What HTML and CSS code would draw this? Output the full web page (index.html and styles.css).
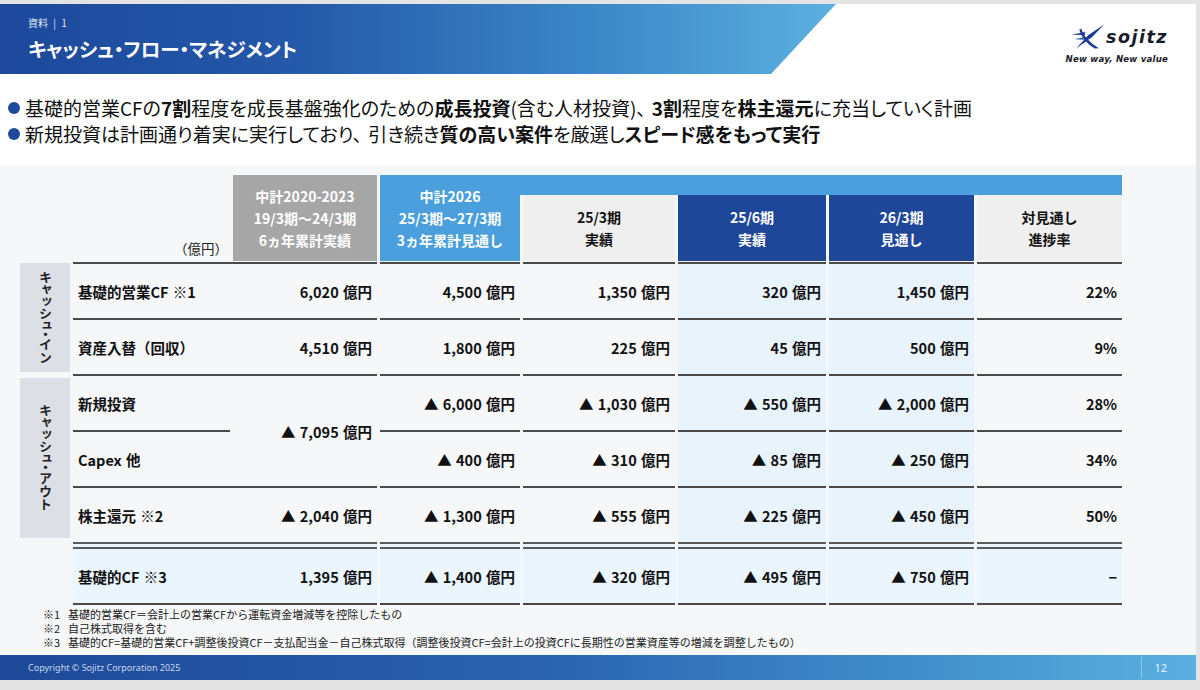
FILE: index.html
```html
<!DOCTYPE html>
<html lang="ja">
<head>
<meta charset="utf-8">
<title>キャッシュ・フロー・マネジメント</title>
<link rel="stylesheet" href="styles.css">
</head>
<body>
<div class="slide">
  <header class="topbar">
    <div class="band">
      <div class="kicker">資料 | 1</div>
      <h1 class="title">キャッシュ・フロー・マネジメント</h1>
    </div>
    <div class="logo">
      <div class="logo-row">
        <svg class="emblem" viewBox="0 0 32 24" width="34" height="25" aria-hidden="true">
          <path d="M0 10.2 L13.5 7.6 L12.8 10.6 Z" fill="#1c3a94"/>
          <path d="M3 14.6 L12.5 12.4 L11.8 15 Z" fill="#2f62ba"/>
          <path d="M4.5 23.5 L16.5 10.5 L31.5 0.5 L20 12.5 Z" fill="#1c3a94"/>
          <path d="M9.5 4.5 Q13 15.5 26.5 23.2 L22.5 23.6 Q11 17 7.6 5.6 Z" fill="#1c3a94"/>
        </svg>
        <span class="brand">sojitz</span>
      </div>
      <div class="tagline">New way, New value</div>
    </div>
  </header>

  <ul class="bullets">
    <li><span class="dot"></span><span>基礎的営業CFの<b>7割</b>程度を成長基盤強化のための<b>成長投資</b>(含む人材投資)<span class="comma">、</span><b>3割</b>程度を<b>株主還元</b>に充当していく計画</span></li>
    <li><span class="dot"></span><span>新規投資は計画通り着実に実行しており<span class="comma">、</span>引き続き<b>質の高い案件</b>を厳選し<b>スピード感をもって実行</b></span></li>
  </ul>

  <main class="main">
    <div class="cf-table">
      <div class="spacer head-spacer"></div>
      <div class="unit">（億円）</div>
      <div class="h h-gray">中計2020-2023<br>19/3期～24/3期<br>6ヵ年累計実績</div>
      <div class="h-band"></div>
      <div class="h h-light">中計2026<br>25/3期～27/3期<br>3ヵ年累計見通し</div>
      <div class="h h-plain h-c3">25/3期<br>実績</div>
      <div class="h h-dark h-c4">25/6期<br>実績</div>
      <div class="h h-dark h-c5">26/3期<br>見通し</div>
      <div class="h h-plain h-c6">対見通し<br>進捗率</div>

      <div class="cat cat-in"><span>キャッシュ・イン</span></div>
      <div class="cat cat-out"><span>キャッシュ・アウト</span></div>
      <div class="c num merged">▲ 7,095 億円</div>
      <div class="spacer foot-spacer"></div>

      <div class="c lbl">基礎的営業CF ※1</div>
      <div class="c num">6,020 億円</div>
      <div class="c num">4,500 億円</div>
      <div class="c num">1,350 億円</div>
      <div class="c num blue">320 億円</div>
      <div class="c num blue">1,450 億円</div>
      <div class="c num">22%</div>

      <div class="c lbl">資産入替（回収）</div>
      <div class="c num">4,510 億円</div>
      <div class="c num">1,800 億円</div>
      <div class="c num">225 億円</div>
      <div class="c num blue">45 億円</div>
      <div class="c num blue">500 億円</div>
      <div class="c num">9%</div>

      <div class="c lbl">新規投資</div>
      <div class="c num">▲ 6,000 億円</div>
      <div class="c num">▲ 1,030 億円</div>
      <div class="c num blue">▲ 550 億円</div>
      <div class="c num blue">▲ 2,000 億円</div>
      <div class="c num">28%</div>

      <div class="c lbl short">Capex 他</div>
      <div class="c num">▲ 400 億円</div>
      <div class="c num">▲ 310 億円</div>
      <div class="c num blue">▲ 85 億円</div>
      <div class="c num blue">▲ 250 億円</div>
      <div class="c num">34%</div>

      <div class="c lbl">株主還元 ※2</div>
      <div class="c num">▲ 2,040 億円</div>
      <div class="c num">▲ 1,300 億円</div>
      <div class="c num">▲ 555 億円</div>
      <div class="c num blue">▲ 225 億円</div>
      <div class="c num blue">▲ 450 億円</div>
      <div class="c num">50%</div>

      <div class="c lbl total">基礎的CF ※3</div>
      <div class="c num total">1,395 億円</div>
      <div class="c num total">▲ 1,400 億円</div>
      <div class="c num total">▲ 320 億円</div>
      <div class="c num total">▲ 495 億円</div>
      <div class="c num total">▲ 750 億円</div>
      <div class="c num total">−</div>
    </div>

    <div class="notes">
      <div class="note"><span class="mark">※1</span>基礎的営業CF＝会計上の営業CFから運転資金増減等を控除したもの</div>
      <div class="note"><span class="mark">※2</span>自己株式取得を含む</div>
      <div class="note"><span class="mark">※3</span>基礎的CF=基礎的営業CF+調整後投資CF－支払配当金－自己株式取得（調整後投資CF=会計上の投資CFに長期性の営業資産等の増減を調整したもの）</div>
    </div>
  </main>

  <footer class="footer">
    <span class="copy">Copyright © Sojitz Corporation 2025</span>
    <span class="page">12</span>
  </footer>
</div>
</body>
</html>
```

FILE: styles.css
```css
* { box-sizing: border-box; }

html, body {
  margin: 0;
  padding: 0;
}

body {
  width: 1200px;
  height: 690px;
  overflow: hidden;
  background: #e4e4e4;
  font-family: "Noto Sans CJK JP", "Noto Sans", sans-serif;
  color: #111;
}

.slide {
  width: 1196px;
  height: 676px;
  margin-top: 4px;
  background: #ffffff;
  display: flex;
  flex-direction: column;
}

/* ---------- top bar ---------- */
.topbar {
  height: 70px;
  display: flex;
  justify-content: space-between;
  flex-shrink: 0;
}

.band {
  width: 836px;
  height: 70px;
  padding: 12px 0 0 28px;
  background: linear-gradient(90deg, #1d489c 0%, #2458a8 35%, #3b86c6 70%, #5cb0e0 100%);
  clip-path: polygon(0 0, 836px 0, 771px 100%, 0 100%);
  color: #fff;
}

.kicker {
  font-size: 10px;
  line-height: 14px;
  color: #dfe8f6;
  word-spacing: 3px;
}

.title {
  margin: 5px 0 0;
  font-size: 19.5px;
  line-height: 28px;
  font-weight: 700;
  font-feature-settings: "palt";
}

.logo {
  margin: 20px 28px 0 0;
  display: flex;
  flex-direction: column;
  align-items: flex-end;
}

.logo-row {
  display: flex;
  align-items: center;
  gap: 1px;
}

.emblem { display: block; }

.brand {
  font-family: "DejaVu Sans", sans-serif;
  font-weight: 700;
  font-style: italic;
  font-size: 17.5px;
  line-height: 20px;
  letter-spacing: 1.5px;
  color: #1a1a2a;
}

.tagline {
  margin-top: 5px;
  font-family: "DejaVu Sans", sans-serif;
  font-weight: 700;
  font-style: italic;
  font-size: 8.6px;
  line-height: 11px;
  color: #1a1a2a;
  letter-spacing: 0.2px;
}

/* ---------- bullets ---------- */
.bullets {
  list-style: none;
  margin: 0;
  padding: 21px 0 0 8px;
  height: 91px;
  flex-shrink: 0;
}

.bullets li {
  display: flex;
  align-items: center;
  font-size: 19px;
  line-height: 26px;
  color: #111;
  white-space: nowrap;
  font-feature-settings: "palt";
}

.bullets b { font-weight: 700; }

.comma { margin-right: 6px; }

.dot {
  width: 12px;
  height: 12px;
  border-radius: 50%;
  background: #1f4a9c;
  margin-right: 5px;
  flex-shrink: 0;
}

/* ---------- main / table ---------- */
.main {
  flex: 1;
  background: #f6f7f8;
  padding-top: 10px;
}

.cf-table {
  margin-left: 20px;
  display: grid;
  grid-template-columns: 50px 157px 144px 140px 152px 148px 145px 145px;
  grid-template-rows: 20px 67px repeat(5, 56px) 63px;
  column-gap: 3px;
}

.head-spacer { grid-column: 1; grid-row: 1 / 3; }
.foot-spacer { grid-column: 1; grid-row: 8; }

.unit {
  grid-column: 2;
  grid-row: 1 / 3;
  align-self: end;
  text-align: right;
  padding: 0 2px 5px 0;
  font-size: 13.5px;
  line-height: 18px;
  color: #222;
}

.h {
  display: flex;
  flex-direction: column;
  align-items: center;
  justify-content: center;
  text-align: center;
  font-size: 14px;
  font-weight: 700;
  line-height: 22px;
  margin-bottom: 1px;
}

.h-gray {
  grid-column: 3;
  grid-row: 1 / 3;
  background: #a6a6a6;
  color: #fff;
}

.h-band {
  grid-column: 4 / 9;
  grid-row: 1;
  background: #4a9fdc;
}

.h-light {
  grid-column: 4;
  grid-row: 1 / 3;
  background: #4a9fdc;
  color: #fff;
}

.h-c3 { grid-column: 5; grid-row: 2; }
.h-c4 { grid-column: 6; grid-row: 2; }
.h-c5 { grid-column: 7; grid-row: 2; }
.h-c6 { grid-column: 8; grid-row: 2; }

.h-plain {
  background: #efefef;
  color: #111;
  border-radius: 3px 3px 0 0;
}

.h-dark {
  background: #1f4799;
  color: #fff;
}

.cat {
  grid-column: 1;
  background: #dcdfe6;
  display: flex;
  align-items: center;
  justify-content: center;
}

.cat span {
  writing-mode: vertical-rl;
  white-space: nowrap;
  font-size: 13px;
  font-weight: 700;
  line-height: 16px;
  color: #222;
  font-feature-settings: "vpal";
  letter-spacing: 1px;
}

.cat-in { grid-row: 3 / 5; margin: 1px 0 2px; }
.cat-out { grid-row: 5 / 8; margin: 4px 0 4px; }

.c {
  border-top: 2px solid #4a4a4a;
  display: flex;
  align-items: center;
  font-size: 14.5px;
  font-weight: 700;
  color: #111;
  white-space: nowrap;
  word-spacing: 1px;
}

.lbl {
  padding-left: 5px;
  margin-right: -3px;
}

.lbl.short { margin-right: 0; }

.num {
  justify-content: flex-end;
  padding-right: 5px;
}

.merged {
  grid-column: 3;
  grid-row: 5 / 7;
}

.blue { background: #e8f3fc; }

.total {
  background: #eaf5fd;
  border-top: 7px double #5a5a5a;
  border-bottom: 2px solid #4a4a4a;
}

/* ---------- notes ---------- */
.notes {
  margin: 2px 0 0 43px;
  font-size: 11px;
  line-height: 14px;
  color: #222;
}

.note { white-space: nowrap; }

.mark {
  display: inline-block;
  width: 25px;
}

/* ---------- footer ---------- */
.footer {
  height: 25px;
  flex-shrink: 0;
  display: flex;
  align-items: center;
  padding: 0 29px 0 28px;
  background: linear-gradient(90deg, #1e4898 0%, #2a62b0 45%, #3f8cc9 75%, #5ab0df 100%);
}

.copy {
  font-family: "Noto Sans", sans-serif;
  font-size: 9px;
  color: #c9d6ee;
}

.page {
  margin-left: auto;
  height: 21px;
  display: flex;
  align-items: center;
  padding-left: 12px;
  border-left: 1px solid rgba(255, 255, 255, 0.35);
  font-family: "Noto Sans", sans-serif;
  font-size: 11px;
  color: #e8f1fb;
}
```
